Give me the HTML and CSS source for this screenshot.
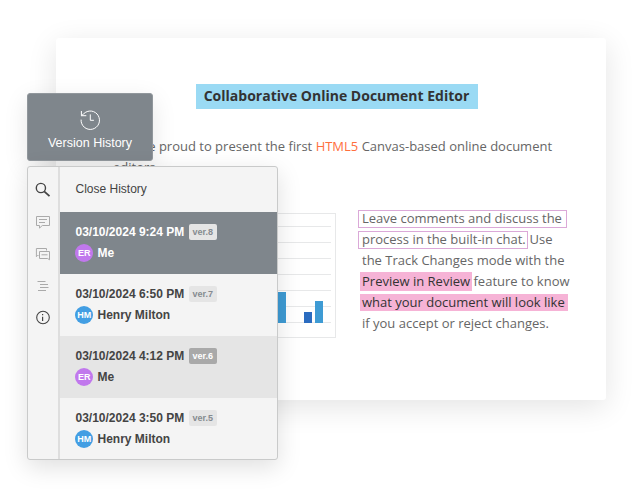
FILE: index.html
```html
<!DOCTYPE html>
<html lang="en">
<head>
<meta charset="utf-8">
<title>Version History</title>
<link rel="stylesheet" href="styles.css">
</head>
<body>
<main class="document">
  <h1 class="title"><span>Collaborative Online Document Editor</span></h1>
  <p class="intro">We are proud to present the first <span class="accent">HTML5</span> Canvas-based online document<br>editors.</p>
  <div class="columns">
    <svg class="chart" width="223" height="126" viewBox="0 0 223 126">
      <rect x=".5" y=".5" width="222" height="124" fill="#fff" stroke="#e7e8e9"/>
      <path d="M8 13.5H218M8 29.5H218M8 45.5H218M8 61.5H218M8 77.5H218M8 93.5H218M8 109.5H218" stroke="#e7e8e9"/>
      <path d="M165 79h8v31h-8zM202 88h8v22h-8z" fill="#3e9bd4"/>
      <path d="M191 99h8v11h-8z" fill="#2b6cc0"/>
    </svg>
    <div class="copy">
      <div><span class="comment first">Leave comments and discuss the</span></div>
      <div><span class="comment second">process in the built-in chat.</span><span class="after-chat">Use</span></div>
      <div class="plain">the Track Changes mode with the</div>
      <div><span class="mark preview">Preview in Review</span><span class="after-mark">feature to know</span></div>
      <div><span class="mark look">what your document will look like</span></div>
      <div class="plain">if you accept or reject changes.</div>
    </div>
  </div>
</main>

<div class="version-button">
  <svg width="22" height="22" viewBox="0 0 22 22" fill="none" stroke="#fff" stroke-width="1">
    <path d="M2.1 10.6A9.2 9.2 0 1 0 4.6 4.9L2.4 6.8M2.4 2v4.7h4.9M11.3 5.4v5.9h3.6"/>
  </svg>
  <span>Version History</span>
</div>

<section class="panel">
  <nav class="rail">
    <svg width="16" height="16" viewBox="0 0 16 16" fill="none" stroke="#444"><circle cx="5.9" cy="6" r="4.6" stroke-width="1.4"/><path d="M9.2 9.3l5.3 4.9" stroke-width="1.8"/></svg>
    <svg width="16" height="16" viewBox="0 0 16 16" fill="none" stroke="#aaa"><path d="M1.5 2.5h13v9H7.3l-2.8 2.6v-2.6h-3zM4 5.5h8M4 8.5h6"/></svg>
    <svg width="16" height="16" viewBox="0 0 16 16" fill="none" stroke="#aaa"><path d="M3.5 9.5h-1L1.4 10.7V2.5h10.1v2M4.5 5.5h10v8.3L12.7 12.5H4.5zM6.5 8.8h6"/></svg>
    <svg width="16" height="16" viewBox="0 0 16 16" fill="none" stroke="#aaa"><path d="M2.5 3.5h8M5 6.5h8M5 9.5h8.5M3 12.5h8"/></svg>
    <svg width="16" height="16" viewBox="0 0 16 16" fill="none" stroke="#444"><circle cx="8" cy="7.5" r="6.3" stroke-width="1.1"/><path d="M7.6 6.7v4.3M7.6 4v1.3" stroke-width="1.2"/></svg>
  </nav>
  <div class="history">
    <div class="close">Close History</div>
    <article class="entry selected">
      <div class="date">03/10/2024 9:24 PM<span class="badge">ver.8</span></div>
      <div class="user"><span class="avatar er">ER</span>Me</div>
    </article>
    <article class="entry">
      <div class="date">03/10/2024 6:50 PM<span class="badge">ver.7</span></div>
      <div class="user"><span class="avatar">HM</span>Henry Milton</div>
    </article>
    <article class="entry shaded">
      <div class="date">03/10/2024 4:12 PM<span class="badge">ver.6</span></div>
      <div class="user"><span class="avatar er">ER</span>Me</div>
    </article>
    <article class="entry">
      <div class="date">03/10/2024 3:50 PM<span class="badge">ver.5</span></div>
      <div class="user"><span class="avatar">HM</span>Henry Milton</div>
    </article>
  </div>
</section>
</body>
</html>
```
FILE: styles.css
```css
* { box-sizing: border-box; }
body {
  position: relative;
  width: 640px;
  height: 500px;
  margin: 0;
  overflow: hidden;
  background: #fff;
  font-family: "Liberation Sans", Arial, sans-serif;
}
.document {
  position: absolute;
  left: 56px;
  top: 38px;
  width: 550px;
  height: 362px;
  padding: 46px 36px 0 57px;
  border-radius: 3px;
  background: #fff;
  box-shadow: 0 7px 30px rgba(0, 0, 0, .11);
  color: #666;
  font: 13px/21px "Open Sans", sans-serif;
}
.title {
  width: 282px;
  height: 25px;
  margin: 0 0 0 82.5px;
  background: #9adaf4;
  color: #333;
  font: 700 14px/24px "Open Sans", sans-serif;
  text-align: center;
  white-space: nowrap;
}
.intro { margin: 27px 0 0; white-space: nowrap; }
.accent { color: #ff6f3d; }
.columns { display: flex; gap: 22px; margin-top: 35px; }
.chart { flex: none; }
.copy { margin-top: -5px; white-space: nowrap; }
.copy > div { display: flex; align-items: center; height: 21px; }
.comment {
  height: 18px;
  padding-left: 3px;
  border: 1px solid #dba9d8;
  line-height: 15px;
}
.first { width: 209px; }
.second { width: 170px; }
.mark {
  height: 19px;
  margin-left: 2px;
  padding-left: 2px;
  background: #f6b3d6;
  color: #333;
  line-height: 19px;
}
.preview { width: 112px; }
.look { width: 208px; height: 17px; line-height: 17px; }
.after-chat { margin-left: 1.5px; }
.after-mark { margin-left: 1.5px; }
.copy > .plain { padding-left: 4px; }
.version-button {
  position: absolute;
  left: 27px;
  top: 93px;
  display: flex;
  flex-direction: column;
  align-items: center;
  width: 126px;
  height: 68px;
  padding-top: 15px;
  border: 1px solid #91979c;
  border-radius: 3px;
  background: #7f868c;
  box-shadow: 0 7px 25px rgba(0, 0, 0, .1);
  color: #fff;
  font-size: 12.5px;
  line-height: 14px;
}
.version-button span { margin-top: 5px; }
.panel {
  position: absolute;
  left: 27px;
  top: 166px;
  display: flex;
  width: 251px;
  height: 294px;
  overflow: hidden;
  border: 1px solid #c9caca;
  border-radius: 3px;
  background: #f4f4f4;
  box-shadow: 0 7px 25px rgba(0, 0, 0, .13);
}
.rail {
  display: flex;
  flex-direction: column;
  align-items: center;
  gap: 16px;
  width: 32px;
  padding-top: 15px;
  border-right: 2px solid #dedede;
}
.rail svg { flex: none; }
.history { flex: 1; color: #444; }
.close { height: 45px; padding-left: 15.5px; font-size: 12px; line-height: 44px; }
.entry { height: 62px; padding: 12px 0 0 15.5px; font-size: 12px; font-weight: 700; }
.selected { background: #7f868c; color: #fff; }
.shaded { background: #e5e5e5; }
.date { display: flex; align-items: center; height: 16px; white-space: nowrap; }
.badge {
  width: 28px;
  height: 16px;
  margin-left: 4.5px;
  border-radius: 2px;
  background: #e5e5e5;
  color: #858b90;
  font-size: 9px;
  line-height: 16px;
  text-align: center;
}
.shaded .badge { background: #a9a9a9; color: #fff; }
.user { display: flex; align-items: center; height: 18px; margin-top: 4px; }
.avatar {
  width: 18px;
  height: 18px;
  margin: 0 4.3px 0 -.3px;
  border-radius: 50%;
  background: #429ee3;
  color: #fff;
  font-size: 9px;
  line-height: 18px;
  text-align: center;
}
.er { background: #c178ed; }
```
